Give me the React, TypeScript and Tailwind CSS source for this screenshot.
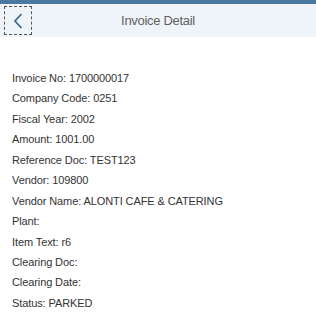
import React from "react";

const rows: [string, string][] = [
  ["Invoice No", "1700000017"],
  ["Company Code", "0251"],
  ["Fiscal Year", "2002"],
  ["Amount", "1001.00"],
  ["Reference Doc", "TEST123"],
  ["Vendor", "109800"],
  ["Vendor Name", "ALONTI CAFE & CATERING"],
  ["Plant", ""],
  ["Item Text", "r6"],
  ["Clearing Doc", ""],
  ["Clearing Date", ""],
  ["Status", "PARKED"],
];

export default function App() {
  return (
    <div className="w-[316px] h-[318px] bg-white overflow-hidden" style={{ fontFamily: '"Liberation Sans", Arial, sans-serif' }}>
      <div className="h-[4px] bg-[#4a78a2]" />
      <div className="h-[33px] bg-[#eff4f9] flex items-center relative">
        <button className="ml-[4px] w-[28px] h-[29px] border border-dashed border-[#555] flex items-center justify-center">
          <svg width="12" height="16" viewBox="0 0 12 16">
            <path d="M9.5 1 L3 8 L9.5 15" fill="none" stroke="#3f6b94" strokeWidth="1.8" />
          </svg>
        </button>
        <div className="absolute inset-0 flex items-center justify-center pointer-events-none text-[13px] tracking-[-0.3px] text-[#5f5f5f]">
          Invoice Detail
        </div>
      </div>
      <div className="pl-[12px] pt-[31px] text-[11px] tracking-[-0.1px] text-[#333]">
        {rows.map(([k, v]) => (
          <div key={k} className="h-[20.45px] leading-[20.45px] whitespace-nowrap">
            {k}: {v}
          </div>
        ))}
      </div>
    </div>
  );
}
